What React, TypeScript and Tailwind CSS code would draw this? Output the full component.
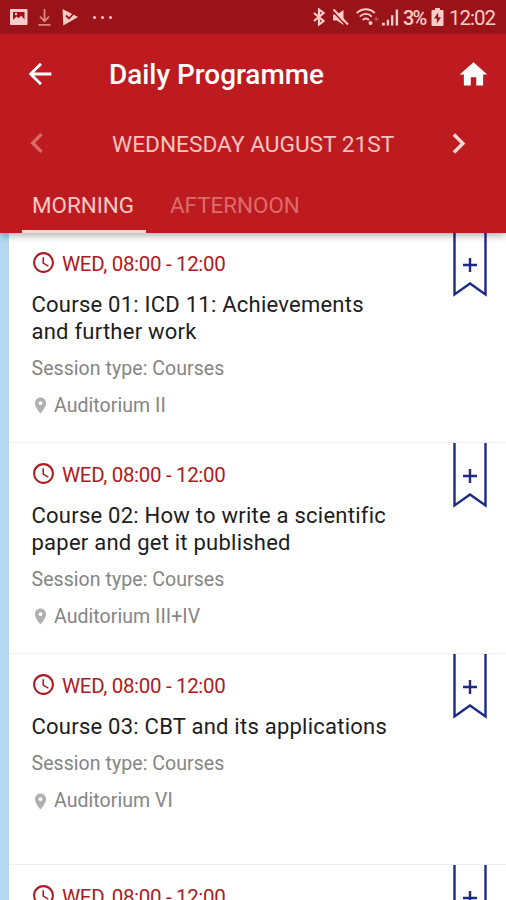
import React from "react";
import {
  MdArrowBack,
  MdChevronLeft,
  MdChevronRight,
  MdHome,
  MdLocationOn,
  MdSchedule,
} from "react-icons/md";

type Session = { id: number; title?: string[]; place?: string };

const sessions: Session[] = [
  { id: 1, title: ["Course 01: ICD 11: Achievements", "and further work"], place: "Auditorium II" },
  { id: 2, title: ["Course 02: How to write a scientific", "paper and get it published"], place: "Auditorium III+IV" },
  { id: 3, title: ["Course 03: CBT and its applications"], place: "Auditorium VI" },
  { id: 4 },
];

function StatusBar() {
  return (
    <div className="flex h-[34px] items-center bg-[#991318] text-[#f9cdc8]">
      <svg className="ml-[10px] h-[16px] w-[18px]" viewBox="0 0 18 16">
        <rect x="0" y="0" width="17.5" height="16" rx="1" fill="currentColor" />
        <path d="M3 3h11.5v7.5L11 6.5 8.7 9.2 6.5 7.5 3 11z" fill="#991318" />
        <circle cx="6" cy="5" r="1.2" fill="currentColor" />
      </svg>
      <svg className="ml-[10px] h-[17px] w-[13px]" viewBox="0 0 13 17" fill="none" stroke="#e08783" strokeWidth="1.8">
        <path d="M6.500 0v12M2 7.500l4.500 4.800L11 7.500M.5 15.800h12" />
      </svg>
      <svg className="ml-[11px] h-[17px] w-[16px]" viewBox="0 0 16 17">
        <path d="M.5 0 16 8 1.300 16.500z" fill="currentColor" />
        <path d="M4 6.500l3 3 6-6.500" fill="none" stroke="#991318" strokeWidth="1.800" />
      </svg>
      <div className="ml-[15px] flex gap-[5px]">
        <span className="size-[3px] rounded-full bg-current" />
        <span className="size-[3px] rounded-full bg-current" />
        <span className="size-[3px] rounded-full bg-current" />
      </div>
      <div className="mr-[11px] ml-auto flex items-center">
        <svg className="h-[18px] w-[12px]" viewBox="0 0 12 18" fill="none" stroke="currentColor" strokeWidth="2.200">
          <path d="M1 5l9.500 8L6 16.500v-15L10.500 5 1 13" />
        </svg>
        <svg className="ml-[7px] h-[17px] w-[17px]" viewBox="0 0 17 17">
          <path d="M1 5.500h4L11.500 1v15L5 11.500H1z" fill="currentColor" />
          <path d="M0 1.500 14.500 17" fill="none" stroke="#991318" strokeWidth="1.500" />
          <path d="M1.500.5 16 15.500" fill="none" stroke="currentColor" strokeWidth="2" />
        </svg>
        <svg className="ml-[7px] h-[18px] w-[24px]" viewBox="0 0 24 18" fill="none" stroke="currentColor" strokeWidth="1.900">
          <path d="M.8 5.200c5-5.200 13-5.200 18 0M3.800 8.600c3.600-3.600 8.600-3.600 12 0M6.800 12c2-2 4.200-2 6.200 0" />
          <circle cx="14.500" cy="15" r="2" fill="currentColor" stroke="none" />
          <path d="M18 11h4.500M20.200 8.800v4.500" stroke="#b8504d" strokeWidth="1.300" />
        </svg>
        <svg className="ml-[2px] h-[17px] w-[17px]" viewBox="0 0 18 17" fill="currentColor">
          <path d="M0 14h3v3H0zM5 11h2.500v6H5zM9.500 6H12v11H9.500zM14.500 0H17v17h-2.500z" />
        </svg>
        <span className="ml-[4px] w-[26px] pt-px text-[20px] leading-none font-medium tracking-[-1.800px] whitespace-nowrap">3%</span>
        <svg className="ml-[2px] h-[18px] w-[13px]" viewBox="0 0 13 18">
          <path d="M4 0h5v2h2.500q1 0 1 1v14q0 1-1 1h-10q-1 0-1-1V3q0-1 1-1H4z" fill="currentColor" />
          <path d="M7.200 4.500 3 10.500h2.800V15.500L10 9.300H7.200z" fill="#991318" />
        </svg>
        <span className="ml-[5px] w-[46px] pt-[2px] text-[20.500px] leading-[24px] tracking-[-1px] whitespace-nowrap">12:02</span>
      </div>
    </div>
  );
}

function Header() {
  return (
    <header className="relative z-10 h-[233px] bg-[#be1b21] shadow-[0_2px_8px_rgba(0,0,0,0.35)]">
      <StatusBar />
      <div className="flex h-[80px] items-center pr-[16px] pl-[23px] text-white">
        <MdArrowBack className="size-[34px]" />
        <h1 className="ml-[52px] pt-[2px] text-[27.900px] leading-none font-medium whitespace-nowrap">Daily Programme</h1>
        <MdHome className="ml-auto size-[33px]" />
      </div>
      <div className="flex h-[58px] items-center pr-[27px] pl-[17px]">
        <MdChevronLeft className="size-[40px] text-[#da6b6a]" />
        <span className="ml-[55px] pt-[4px] text-[22.700px] leading-none whitespace-nowrap text-[#fbc4c0]">WEDNESDAY AUGUST 21ST</span>
        <MdChevronRight className="ml-auto size-[41px] text-[#fdd8d5]" />
      </div>
      <nav className="flex h-[61px] pl-[22px] text-[22.400px] leading-[66px] whitespace-nowrap">
        <div className="w-[124px] border-b-[3px] border-[#fbd5d0] pl-[10px] text-[#fbc9c4]">MORNING</div>
        <div className="pl-[24px] text-[#dc6c6b]">AFTERNOON</div>
      </nav>
    </header>
  );
}

function Bookmark() {
  return (
    <svg className="mr-[18px] h-[66px] w-[36px] shrink-0" viewBox="0 0 36 66" fill="none" stroke="#1c2b86" strokeWidth="2.400">
      <path d="M2.500 0V62.500L18 51.500 33.500 62.500V0" />
      <path d="M11 33H25M18 26V40" />
    </svg>
  );
}

function SessionRow({ session }: { session: Session }) {
  return (
    <article className="flex h-[211px] shrink-0 items-start justify-between border-b border-[#eceff0] bg-white">
      <div className="pt-[20px] pl-[23px] whitespace-nowrap">
        <div className="flex h-6 items-center text-[#ae1a22]">
          <MdSchedule className="-ml-[1px] size-[25px] -translate-y-[2px]" />
          <span className="ml-[6px] text-[20.500px] leading-6 tracking-[-0.330px]">WED, 08:00 - 12:00</span>
        </div>
        {session.title && (
          <>
            <h2 className="mt-4 -ml-[0.500px] text-[22px] leading-[26.500px] tracking-[0.240px] text-[#1c1c1c]">
              {session.title.map((line) => (
                <span key={line} className="block">{line}</span>
              ))}
            </h2>
            <p className="mt-[11.500px] -ml-[0.500px] text-[19.500px] leading-6 tracking-[0.060px] text-[#858585]">Session type: Courses</p>
            <div className="mt-[13px] flex h-6 items-center text-[#858585]">
              <MdLocationOn className="-ml-[1.500px] size-[19px] text-[#b0b0b0]" />
              <span className="ml-[4.500px] text-[19.500px] leading-6 tracking-[0.060px]">{session.place}</span>
            </div>
          </>
        )}
      </div>
      <Bookmark />
    </article>
  );
}

export default function App() {
  return (
    <div className="flex h-[900px] w-[506px] flex-col overflow-hidden bg-white font-[Roboto,sans-serif]">
      <Header />
      <main className="-mt-px flex h-[668px] flex-col overflow-hidden border-l-[9px] border-[#b4d8f1]">
        {sessions.map((session) => (
          <SessionRow key={session.id} session={session} />
        ))}
      </main>
    </div>
  );
}
